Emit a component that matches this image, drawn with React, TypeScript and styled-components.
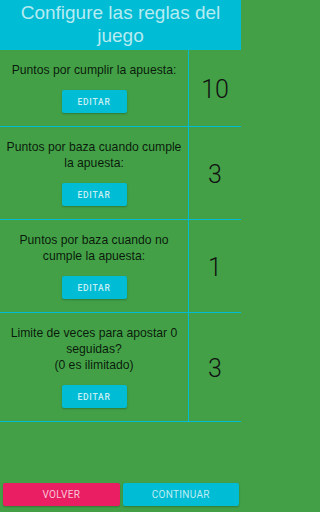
import React from "react";
import styled, { createGlobalStyle } from "styled-components";

const GlobalStyle = createGlobalStyle`
  html, body {
    margin: 0;
    padding: 0;
    background: #43a047;
  }
  * {
    box-sizing: border-box;
  }
`;

interface IRule {
  label: string[];
  value: number;
}

const rules: IRule[] = [
  { label: ["Puntos por cumplir la apuesta:"], value: 10 },
  { label: ["Puntos por baza cuando cumple la apuesta:"], value: 3 },
  { label: ["Puntos por baza cuando no cumple la apuesta:"], value: 1 },
  {
    label: ["Limite de veces para apostar 0 seguidas?", "(0 es ilimitado)"],
    value: 3,
  },
];

const App = () => {
  return (
    <Page>
      <GlobalStyle />
      <Header>Configure las reglas del juego</Header>
      <List>
        {rules.map((rule, idx) => (
          <Row key={idx}>
            <Info>
              {rule.label.map((line, i) => (
                <Label key={i}>{line}</Label>
              ))}
              <EditButton>Editar</EditButton>
            </Info>
            <Value>{rule.value}</Value>
          </Row>
        ))}
      </List>
      <Footer>
        <FooterButton $color="#e91e63">Volver</FooterButton>
        <FooterButton $color="#00bcd4">Continuar</FooterButton>
      </Footer>
    </Page>
  );
};

const Page = styled.div`
  width: 241px;
  min-height: 100vh;
  display: flex;
  flex-direction: column;
  background: #43a047;
  font-family: "Liberation Sans", Arial, sans-serif;
`;

const Header = styled.header`
  height: 50px;
  background: #00bcd4;
  color: rgba(255, 255, 255, 0.72);
  font-size: 19px;
  line-height: 23px;
  text-align: center;
  padding: 1px 14px 0;
`;

const List = styled.section`
  flex: 1;
`;

const Row = styled.div`
  display: grid;
  grid-template-columns: 189px 1fr;
  border-bottom: 1px solid #00bcd4;
`;

const Info = styled.div`
  display: flex;
  flex-direction: column;
  align-items: center;
  padding: 12px 4px 13px;
  border-right: 1px solid #00bcd4;
`;

const Label = styled.p`
  margin: 0;
  font-size: 12.2px;
  line-height: 16px;
  color: rgba(0, 0, 0, 0.85);
  text-align: center;
`;

const EditButton = styled.button`
  margin-top: 12px;
  width: 65px;
  height: 23px;
  border: none;
  border-radius: 2px;
  background: #00bcd4;
  color: rgba(255, 255, 255, 0.8);
  font-family: Roboto, "Liberation Sans", sans-serif;
  font-size: 8.5px;
  font-weight: 500;
  letter-spacing: 0.8px;
  text-transform: uppercase;
  box-shadow: 0 1px 2px rgba(0, 0, 0, 0.25);
`;

const Value = styled.div`
  display: flex;
  align-items: center;
  justify-content: center;
  padding-top: 3px;
  font-family: Roboto, "Liberation Sans", sans-serif;
  font-weight: 300;
  font-size: 25px;
  color: #111;
`;

const Footer = styled.footer`
  display: grid;
  grid-template-columns: 1fr 1fr;
  gap: 3px;
  padding: 0 2px 6px 3px;
`;

const FooterButton = styled.button<{ $color: string }>`
  height: 23px;
  border: none;
  border-radius: 2px;
  background: ${(p) => p.$color};
  color: rgba(255, 255, 255, 0.75);
  font-family: Roboto, "Liberation Sans", sans-serif;
  font-size: 10px;
  letter-spacing: 0.3px;
  text-transform: uppercase;
  box-shadow: 0 1px 2px rgba(0, 0, 0, 0.25);
`;

export default App;
